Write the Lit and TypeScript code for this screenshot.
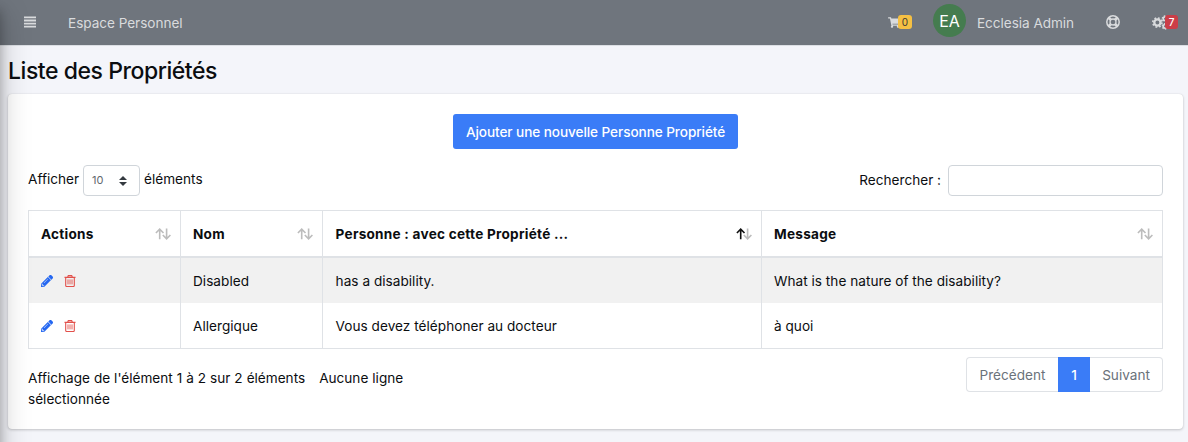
import { LitElement, html, css, svg } from "lit";
import { customElement } from "lit/decorators.js";

const arrowUp = svg`<path d="M4.7 12.2V2.4M0.9 6L4.7 2.2L8.5 6" />`;
const arrowDown = svg`<path d="M11.6 1.6V11.4M7.8 8L11.6 11.8L15.4 8" />`;

const sortIcon = (active = false) => html`<svg class="sort" viewBox="0 0 16 14">
  <g class="off">${arrowDown}</g>
  <g class=${active ? "on" : "off"}>${arrowUp}</g>
</svg>`;

const pencil = html`<svg class="pencil" viewBox="0 0 512 512"><path d="M497.9 142.1l-46.1 46.1c-4.7 4.7-12.3 4.7-17 0l-111-111c-4.7-4.7-4.7-12.3 0-17l46.1-46.1c18.7-18.7 49.1-18.7 67.9 0l60.1 60.1c18.8 18.7 18.8 49.1 0 67.9zM284.2 99.8L21.6 362.4.4 483.9c-2.9 16.4 11.4 30.6 27.8 27.8l121.5-21.3 262.6-262.6c4.7-4.7 4.7-12.3 0-17l-111-111c-4.8-4.7-12.4-4.7-17.1 0zM124.1 339.9c-5.5-5.5-5.5-14.3 0-19.8l154-154c5.5-5.5 14.3-5.5 19.8 0s5.5 14.3 0 19.8l-154 154c-5.5 5.5-14.3 5.5-19.8 0zM88 424h48v36.3l-64.5 11.3-31.1-31.1L51.7 376H88v48z"/></svg>`;

const trash = html`<svg class="trash" viewBox="0 0 12 12">
  <path d="M0.5 2.4H11.5M3.6 2.2L4.3 0.6H7.7L8.4 2.2M1.7 2.6V10.6Q1.7 11.5 2.6 11.5H9.4Q10.3 11.5 10.3 10.6V2.6"/>
  <path class="thin" d="M4 4.4V9.4M6 4.4V9.4M8 4.4V9.4"/>
</svg>`;

@customElement("app-root")
export class AppRoot extends LitElement {
  static styles = css`
    :host {
      display: block;
      position: relative;
      height: 442px;
      overflow: hidden;
      background: #f4f5fa;
      color: #0b0d10;
      font: 13.6px/21px Inter, "Liberation Sans", sans-serif;
    }
    * { box-sizing: border-box; }
    svg { display: block; flex: none; }
    .drawer {
      position: absolute;
      z-index: 2;
      top: 0;
      left: -250px;
      width: 250px;
      height: 600px;
      box-shadow: 0 14px 28px rgba(0, 0, 0, 0.25), 0 10px 10px rgba(0, 0, 0, 0.22);
    }
    .navbar {
      display: flex;
      align-items: center;
      height: 46px;
      padding: 0 10px 1px 24px;
      background: #6f757d;
      border-bottom: 1px solid #dcdfe4;
      color: #d9dbdd;
    }
    .menu { width: 12px; height: 12px; fill: currentColor; margin-right: 32px; }
    .space { flex: 1; padding-top: 2px; letter-spacing: -0.04px; }
    .cart { display: flex; align-items: center; margin-right: 21px; }
    .cart svg { width: 12px; height: 11px; fill: currentColor; }
    .badge {
      flex: none;
      width: 14px;
      height: 14px;
      border-radius: 3px;
      font-size: 10px;
      line-height: 14px;
      text-align: center;
      position: relative;
    }
    .warn { margin-left: -2px; background: #f5c043; color: #3a3a35; }
    .danger { margin-left: -5px; background: #cb3e48; color: #fff; font-weight: 500; width: 13px; }
    .avatar {
      width: 33px;
      height: 33px;
      margin: -4px 11px 0 0;
      border-radius: 50%;
      background: #457c4f;
      color: #fff;
      font-size: 16px;
      line-height: 34px;
      text-align: center;
    }
    .user { width: 129px; padding-top: 2px; letter-spacing: -0.05px; }
    .ring { width: 14px; height: 14px; margin-right: 32px; fill: none; stroke: currentColor; }
    .cogs { width: 18px; height: 15px; fill: none; stroke: currentColor; }
    h1 {
      margin: 0;
      padding: 12px 8px 0;
      height: 48px;
      font-size: 23px;
      line-height: 26px;
      font-weight: 500;
      letter-spacing: -0.45px;
    }
    .card {
      display: flex;
      flex-direction: column;
      margin: 0 5px 0 8px;
      height: 335px;
      padding: 20px 20px 10px;
      border-radius: 4px;
      background: #fff;
      box-shadow: 0 0 1px rgba(0, 0, 0, 0.13), 0 1px 3px rgba(0, 0, 0, 0.2);
    }
    .add {
      align-self: center;
      flex: none;
      width: 285px;
      height: 35px;
      padding: 2px 0 0;
      border: 0;
      border-radius: 3px;
      background: #3a7cf7;
      color: #fff;
      font: inherit;
      font-weight: 500;
      letter-spacing: -0.08px;
    }
    .tools { display: flex; flex: none; justify-content: space-between; height: 31px; margin: 16px 0 14px; }
    .length, .search { display: flex; align-items: center; }
    .length span { margin-top: -3px; }
    .select {
      display: flex;
      align-items: center;
      justify-content: space-between;
      width: 57px;
      height: 31px;
      margin: 0 4px;
      padding: 0 12px 0 8px;
      border: 1px solid #d0d5da;
      border-radius: 4px;
      color: #62686e;
      font-size: 11px;
    }
    .select svg { width: 8px; height: 10px; fill: #343a40; }
    .search input {
      width: 215px;
      height: 31px;
      margin-left: 7px;
      border: 1px solid #d0d5da;
      border-radius: 4px;
      background: #fff;
    }
    .search span { margin-top: -1px; }
    .table {
      flex: none;
      width: 1135px;
      border-collapse: separate;
      border-spacing: 0;
      table-layout: fixed;
      border: solid #dfe2e6;
      border-width: 1px 0 0 1px;
    }
    th, td { padding: 2px 12px 0; text-align: left; border-right: 1px solid #dfe2e6; }
    td { letter-spacing: 0.03px; }
    th:nth-child(3), td:nth-child(3) { padding-left: 12.6px; }
    th { height: 47px; font-weight: 650; border-bottom: 2px solid #dfe2e6; letter-spacing: 0.25px; }
    td { height: 45px; }
    tr:last-child td { height: 46px; border-bottom: 1px solid #dfe2e6; }
    .odd { background: #f1f1f1; }
    .c1 { width: 152px; }
    .c2 { width: 142px; }
    .c3 { width: 439px; }
    .head { display: flex; align-items: center; justify-content: space-between; margin-right: -3px; }
    .sort { width: 16px; height: 14px; fill: none; stroke-width: 1.6; margin-top: -2px; }
    .off { stroke: #bcbcbc; }
    .on { stroke: #111; }
    .acts { display: flex; gap: 11px; margin-top: -2px; }
    .pencil { width: 12px; height: 12px; fill: #2467f2; stroke: #2467f2; stroke-width: 12; }
    .trash { width: 12px; height: 12px; fill: none; stroke: #e2504b; stroke-width: 1.1; }
    .thin { stroke-width: 0.9; }
    .foot { display: flex; flex: none; justify-content: space-between; align-items: flex-start; padding-top: 8px; }
    .info { width: 420px; padding-top: 11px; word-spacing: 0.15px; }
    .sel { margin-left: 14px; }
    .pages { display: flex; height: 35px; color: #6a727a; text-align: center; }
    .pages span { border: 1px solid #dfe2e6; line-height: 34px; }
    .pages .prev { width: 92px; border-right: 0; border-radius: 4px 0 0 4px; }
    .pages .cur { width: 32px; background: #3a7cf7; border-color: #3a7cf7; color: #fff; font-weight: 500; }
    .pages .next { width: 73px; border-left: 0; border-radius: 0 4px 4px 0; }
  `;

  render() {
    return html`
      <div class="drawer"></div>
      <nav class="navbar">
        <svg class="menu" viewBox="0 0 12 12"><path d="M0 .5h12v1.8H0zM0 3.6h12v1.8H0zM0 6.7h12v1.8H0zM0 9.8h12v1.8H0z"/></svg>
        <span class="space">Espace Personnel</span>
        <div class="cart">
          <svg viewBox="0 0 576 512"><path d="M528.12 301.319l47.273-208C578.806 78.301 567.391 64 551.99 64H159.208l-9.166-44.81C147.758 8.021 137.93 0 126.529 0H24C10.745 0 0 10.745 0 24v16c0 13.255 10.745 24 24 24h69.883l70.248 343.435C147.325 417.1 136 435.222 136 456c0 30.928 25.072 56 56 56s56-25.072 56-56c0-15.674-6.447-29.835-16.824-40h209.647C430.447 426.165 424 440.326 424 456c0 30.928 25.072 56 56 56s56-25.072 56-56c0-22.172-12.888-41.332-31.579-50.405l5.517-24.276c3.413-15.018-8.002-29.319-23.403-29.319H218.117l-6.545-32h293.145c11.206 0 20.92-7.754 23.403-18.681z"/></svg>
          <span class="badge warn">0</span>
        </div>
        <div class="avatar">EA</div>
        <span class="user">Ecclesia Admin</span>
        <svg class="ring" viewBox="0 0 14 14">
          <circle cx="7" cy="7" r="6.2" stroke-width="1.5"/>
          <circle cx="7" cy="7" r="3" stroke-width="1.3"/>
          <path stroke-width="2.8" d="M2.7 2.7L4.8 4.8M11.3 2.7L9.2 4.8M2.7 11.3L4.8 9.2M11.3 11.3L9.2 9.2"/>
        </svg>
        <svg class="cogs" viewBox="0 0 18 15">
          <circle cx="5.4" cy="7.5" r="3.1" stroke-width="2.3"/>
          <circle cx="5.4" cy="7.5" r="4.6" stroke-width="1.6" stroke-dasharray="1.8 1.81"/>
          <circle cx="13" cy="3.7" r="1.8" stroke-width="1.6"/>
          <circle cx="13" cy="3.7" r="2.8" stroke-width="1.1" stroke-dasharray="1.47 1.46"/>
          <circle cx="13" cy="11.3" r="1.8" stroke-width="1.6"/>
          <circle cx="13" cy="11.3" r="2.8" stroke-width="1.1" stroke-dasharray="1.47 1.46"/>
        </svg>
        <span class="badge danger">7</span>
      </nav>
      <h1>Liste des Propriétés</h1>
      <section class="card">
        <button class="add">Ajouter une nouvelle Personne Propriété</button>
        <div class="tools">
          <div class="length">
            <span>Afficher</span>
            <div class="select">10<svg viewBox="0 0 8 10"><path d="M4 0L8 4H0zM0 6h8L4 10z"/></svg></div>
            <span>éléments</span>
          </div>
          <label class="search"><span>Rechercher :</span><input type="text" /></label>
        </div>
        <table class="table">
          <thead>
            <tr>
              <th class="c1"><div class="head">Actions${sortIcon()}</div></th>
              <th class="c2"><div class="head">Nom${sortIcon()}</div></th>
              <th class="c3"><div class="head">Personne : avec cette Propriété ...${sortIcon(true)}</div></th>
              <th><div class="head">Message${sortIcon()}</div></th>
            </tr>
          </thead>
          <tbody>
            <tr class="odd">
              <td><div class="acts">${pencil}${trash}</div></td>
              <td>Disabled</td>
              <td>has a disability.</td>
              <td>What is the nature of the disability?</td>
            </tr>
            <tr>
              <td><div class="acts">${pencil}${trash}</div></td>
              <td>Allergique</td>
              <td>Vous devez téléphoner au docteur</td>
              <td>à quoi</td>
            </tr>
          </tbody>
        </table>
        <div class="foot">
          <div class="info">Affichage de l'élément 1 à 2 sur 2 éléments<span class="sel">Aucune ligne sélectionnée</span></div>
          <div class="pages"><span class="prev">Précédent</span><span class="cur">1</span><span class="next">Suivant</span></div>
        </div>
      </section>
    `;
  }
}
